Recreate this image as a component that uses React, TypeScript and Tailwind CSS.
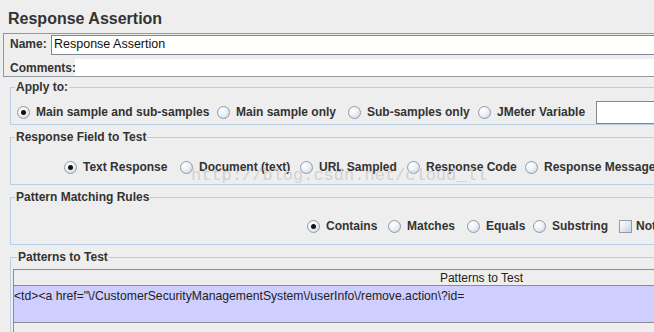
import React from 'react';

const font = { fontFamily: '"Liberation Sans", Arial, sans-serif' };

function Radio({ checked = false }: { checked?: boolean }) {
    return (
        <span className="relative inline-flex w-[13px] h-[13px] shrink-0 rounded-full border border-[#8f9baa] bg-[radial-gradient(circle_at_35%_30%,#ffffff_0%,#eef2f7_45%,#c3cfdd_100%)] items-center justify-center">
            {checked && <span className="w-[5px] h-[5px] rounded-full bg-[#111]" />}
        </span>
    );
}

function RadioItem({ label, checked, w }: { label: string; checked?: boolean; w?: string }) {
    return (
        <div className={`flex items-center shrink-0 ${w ?? ''}`}>
            <Radio checked={checked} />
            <span className="ml-[6px] text-[12px] font-bold text-[#333] whitespace-nowrap">{label}</span>
        </div>
    );
}

function Group({ title, children, className }: { title: string; children: React.ReactNode; className?: string }) {
    return (
        <fieldset className={`ml-[10px] w-[700px] border border-[#b8cfe5] ${className ?? ''}`}>
            <legend className="ml-[4px] px-[1px] text-[12px] leading-[14px] font-bold text-[#333]">{title}</legend>
            {children}
        </fieldset>
    );
}

export default function App() {
    return (
        <div className="relative w-[654px] h-[332px] overflow-hidden bg-[#eeeeee]" style={font}>
            {/* Title */}
            <div className="h-[33px] pl-[8px] pt-[9px] text-[16px] leading-[19px] font-bold text-[#333]">Response Assertion</div>

            {/* Name / Comments */}
            <div className="ml-[3px] w-[700px] h-[44px] border border-[#8f979f] flex flex-col">
                <div className="h-[21px] flex items-stretch pt-[1px]">
                    <span className="w-[47px] pl-[6px] text-[12px] font-bold text-[#333] leading-[19px]">Name:</span>
                    <div className="flex-1 bg-[#fffffc] border-t border-b border-l border-[#7d8892] text-[12.5px] leading-[17px] pl-[2px] text-[#111]">
                        Response Assertion
                    </div>
                </div>
                <div className="flex-1 flex items-end">
                    <span className="w-[71px] pl-[6px] text-[12px] font-bold text-[#333] leading-[14px] pb-[1px]">Comments:</span>
                    <div className="flex-1 h-[17px] bg-white" />
                </div>
            </div>

            {/* Apply to */}
            <Group title="Apply to:" className="mt-[3px] pt-[8px] pb-[2px]">
                <div className="h-[20px] flex items-center pl-[6px]">
                    <RadioItem label="Main sample and sub-samples" checked w="w-[200px]" />
                    <RadioItem label="Main sample only" w="w-[131px]" />
                    <RadioItem label="Sub-samples only" w="w-[130px]" />
                    <RadioItem label="JMeter Variable" w="w-[118px]" />
                    <div className="w-[100px] h-[23px] bg-white border border-[#7d8892]" />
                </div>
            </Group>

            {/* Response Field to Test */}
            <Group title="Response Field to Test" className="mt-[5px] pt-[13px] pb-[7px]">
                <div className="h-[20px] flex items-center pl-[53px]">
                    <RadioItem label="Text Response" checked w="w-[116px]" />
                    <RadioItem label="Document (text)" w="w-[120px]" />
                    <RadioItem label="URL Sampled" w="w-[107px]" />
                    <RadioItem label="Response Code" w="w-[118px]" />
                    <RadioItem label="Response Message" />
                </div>
            </Group>

            {/* Pattern Matching Rules */}
            <Group title="Pattern Matching Rules" className="mt-[5px] pt-[12px] pb-[8px]">
                <div className="h-[20px] flex items-center pl-[296px]">
                    <RadioItem label="Contains" checked w="w-[81px]" />
                    <RadioItem label="Matches" w="w-[79px]" />
                    <RadioItem label="Equals" w="w-[66px]" />
                    <RadioItem label="Substring" w="w-[86px]" />
                    <div className="flex items-center">
                        <span className="w-[13px] h-[13px] border border-[#8f9baa] bg-[linear-gradient(135deg,#ffffff_0%,#dde5ef_60%,#c3cfdd_100%)]" />
                        <span className="ml-[4px] text-[12px] font-bold text-[#333]">Not</span>
                    </div>
                </div>
            </Group>

            {/* Patterns to Test */}
            <Group title="Patterns to Test" className="mt-[5px] pt-[5px] pl-[2px] h-[100px]">
                <div className="w-[936px] h-[80px] border-l border-t border-[#8a8e93] flex flex-col">
                    <div className="h-[16px] border-b border-[#8a8e93] text-center text-[12px] leading-[16px] text-[#222]">
                        Patterns to Test
                    </div>
                    <div className="h-[37px] bg-[#ceceff] border-b border-[#8a8e93] text-[12.2px] leading-[16px] pt-[2px] text-[#222] whitespace-nowrap">
                        {'<td><a href="\\/CustomerSecurityManagementSystem\\/userInfo\\/remove.action\\?id='}
                    </div>
                </div>
            </Group>

            {/* Watermark */}
            <div
                className="absolute left-[191px] top-[165px] text-[17px] leading-[22px] text-[#d2d2d2] whitespace-nowrap pointer-events-none"
                style={{ fontFamily: '"Liberation Mono", "Courier New", monospace' }}
            >
                http://blog.csdn.net/cloud_ll
            </div>
        </div>
    );
}
